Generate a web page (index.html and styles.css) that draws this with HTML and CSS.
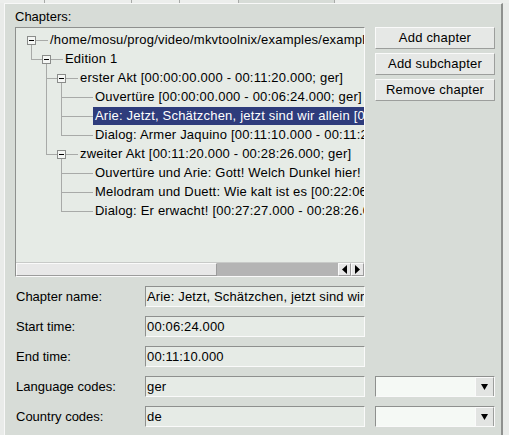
FILE: index.html
```html
<!DOCTYPE html>
<html>
<head>
<meta charset="utf-8">
<link rel="stylesheet" href="styles.css">
</head>
<body>
<div class="tabs">
  <span class="tab t1"></span><span class="tab t2"></span><span class="tab t3"></span><span class="tab t4"></span><span class="tab t5 sel"></span><span class="tab t6"></span>
</div>
<div class="panel">
  <div class="section-label">Chapters:</div>
  <div class="top">
    <div class="tree-frame">
      <div class="tree">
        <div class="row"><span class="cell box open nolead"><span class="exp"></span></span><span class="stub"></span><span class="label">/home/mosu/prog/video/mkvtoolnix/examples/example-chapters-1.xml</span></div>
        <div class="row"><span class="cell corner"></span><span class="cell box open"><span class="exp"></span></span><span class="stub"></span><span class="label">Edition 1</span></div>
        <div class="row"><span class="cell"></span><span class="cell tee"></span><span class="cell box open"><span class="exp"></span></span><span class="stub"></span><span class="label">erster Akt [00:00:00.000 - 00:11:20.000; ger]</span></div>
        <div class="row"><span class="cell"></span><span class="cell vert"></span><span class="cell tee"></span><span class="cell hline"></span><span class="stub"></span><span class="label">Ouvertüre [00:00:00.000 - 00:06:24.000; ger]</span></div>
        <div class="row"><span class="cell"></span><span class="cell vert"></span><span class="cell tee"></span><span class="cell hline"></span><span class="stub"></span><span class="label selected">Arie: Jetzt, Schätzchen, jetzt sind wir allein [00:06:24.000 - 00:11:10.000; ger]</span></div>
        <div class="row"><span class="cell"></span><span class="cell vert"></span><span class="cell corner"></span><span class="cell hline"></span><span class="stub"></span><span class="label">Dialog: Armer Jaquino [00:11:10.000 - 00:11:20.000; ger]</span></div>
        <div class="row"><span class="cell"></span><span class="cell corner"></span><span class="cell box open"><span class="exp"></span></span><span class="stub"></span><span class="label">zweiter Akt [00:11:20.000 - 00:28:26.000; ger]</span></div>
        <div class="row"><span class="cell"></span><span class="cell"></span><span class="cell tee"></span><span class="cell hline"></span><span class="stub"></span><span class="label">Ouvertüre und Arie: Gott! Welch Dunkel hier! [00:11:20.000 - 00:22:06.000; ger]</span></div>
        <div class="row"><span class="cell"></span><span class="cell"></span><span class="cell tee"></span><span class="cell hline"></span><span class="stub"></span><span class="label">Melodram und Duett: Wie kalt ist es [00:22:06.000 - 00:27:27.000; ger]</span></div>
        <div class="row"><span class="cell"></span><span class="cell"></span><span class="cell corner"></span><span class="cell hline"></span><span class="stub"></span><span class="label">Dialog: Er erwacht! [00:27:27.000 - 00:28:26.000; ger]</span></div>
      </div>
      <div class="hscroll">
        <div class="thumb"></div>
        <div class="trough"></div>
        <div class="arrow"><svg width="7" height="9" viewBox="0 0 7 9"><polygon points="6,0 6,9 1,4.5" fill="#000"/></svg></div>
        <div class="arrow"><svg width="7" height="9" viewBox="0 0 7 9"><polygon points="1,0 1,9 6,4.5" fill="#000"/></svg></div>
      </div>
    </div>
    <div class="buttons">
      <div class="btn">Add chapter</div>
      <div class="btn">Add subchapter</div>
      <div class="btn">Remove chapter</div>
    </div>
  </div>
  <div class="form">
    <div class="flabel">Chapter name:</div>
    <div class="entry">Arie: Jetzt, Schätzchen, jetzt sind wir allein</div>
    <div></div>
    <div class="flabel">Start time:</div>
    <div class="entry">00:06:24.000</div>
    <div></div>
    <div class="flabel">End time:</div>
    <div class="entry">00:11:10.000</div>
    <div></div>
    <div class="flabel">Language codes:</div>
    <div class="entry">ger</div>
    <div class="combo"><div class="combo-text"></div><div class="combo-btn"><svg width="7" height="8" viewBox="0 0 7 8"><polygon points="0,1 7,1 3.5,7" fill="#000"/></svg></div></div>
    <div class="flabel">Country codes:</div>
    <div class="entry">de</div>
    <div class="combo"><div class="combo-text"></div><div class="combo-btn"><svg width="7" height="8" viewBox="0 0 7 8"><polygon points="0,1 7,1 3.5,7" fill="#000"/></svg></div></div>
  </div>
</div>
</body>
</html>
```
FILE: styles.css
```css
html, body {
  margin: 0;
  padding: 0;
}
body {
  width: 509px;
  height: 435px;
  overflow: hidden;
  background: #e9ebe9;
  font-family: "Liberation Sans", Arial, sans-serif;
  font-size: 13px;
  color: #000;
}
.tabs {
  display: flex;
  height: 3px;
  background: #eceeec;
}
.tab {
  height: 3px;
  box-sizing: border-box;
  border-right: 1px solid #a8aaa8;
  background: #eceeec;
}
.t1 { width: 45px; }
.t2 { width: 87px; }
.t3 { width: 48px; }
.t4 { width: 59px; }
.t5 { width: 96px; }
.t6 { flex: 1; border-right: none; }
.tab.sel { background: #d7dcd7; }
.panel {
  margin-left: 4px;
  width: 499px;
  height: 432px;
  box-sizing: border-box;
  background: #d7dcd7;
  border-top: 1px solid #f8f8f8;
  border-left: 1px solid #f8f8f8;
  border-right: 2px solid #8e908e;
  padding: 5px 0 0 10px;
}
.section-label {
  height: 15px;
  line-height: 15px;
  margin-bottom: 3px;
}
.top {
  display: flex;
  align-items: flex-start;
}
.tree-frame {
  width: 350px;
  box-sizing: border-box;
  border: 1px solid;
  border-color: #8e908e #fafafa #fafafa #8e908e;
  background: #e6ebe6;
}
.tree {
  height: 234px;
  box-sizing: border-box;
  padding: 3px 0 0 8px;
  overflow: hidden;
}
.row {
  display: flex;
  height: 19px;
  white-space: nowrap;
}
.cell {
  position: relative;
  flex: none;
  width: 15px;
  height: 19px;
}
.stub {
  position: relative;
  flex: none;
  width: 9px;
  height: 19px;
}
.vert::before,
.tee::before {
  content: "";
  position: absolute;
  left: 7px;
  top: 0;
  bottom: 0;
  border-left: 1px solid #a8aaa8;
}
.corner::before {
  content: "";
  position: absolute;
  left: 7px;
  top: 0;
  height: 10px;
  border-left: 1px solid #a8aaa8;
}
.tee::after,
.corner::after {
  content: "";
  position: absolute;
  left: 7px;
  right: 0;
  top: 9px;
  border-top: 1px solid #a8aaa8;
}
.hline::before,
.stub::before,
.box::before {
  content: "";
  position: absolute;
  left: 0;
  right: 0;
  top: 9px;
  border-top: 1px solid #a8aaa8;
}
.box.nolead::before { left: 7px; }
.box.open::after {
  content: "";
  position: absolute;
  left: 7px;
  top: 14px;
  bottom: 0;
  border-left: 1px solid #a8aaa8;
}
.exp {
  position: absolute;
  left: 3px;
  top: 5px;
  width: 9px;
  height: 9px;
  box-sizing: border-box;
  border: 1px solid #8a8c8a;
  background: #f4f6f4;
  z-index: 1;
}
.exp::after {
  content: "";
  position: absolute;
  left: 1px;
  top: 3px;
  width: 5px;
  height: 1px;
  background: #000;
}
.label {
  flex: none;
  height: 18px;
  line-height: 18px;
  padding: 0 2px;
  letter-spacing: 0.2px;
}
.label.selected {
  background: #2e3c7c;
  color: #fff;
}
.hscroll {
  display: flex;
  height: 14px;
  border-top: 1px solid #c8cac8;
  box-sizing: border-box;
  background: #b4b4b4;
}
.thumb {
  width: 201px;
  box-sizing: border-box;
  background: #e8e8e8;
  border: 1px solid;
  border-color: #fafafa #9c9c9c #9c9c9c #fafafa;
}
.trough {
  flex: 1;
}
.arrow {
  width: 13px;
  box-sizing: border-box;
  background: #e6e6e6;
  border: 1px solid;
  border-color: #fafafa #9c9c9c #9c9c9c #fafafa;
  display: flex;
  align-items: center;
  justify-content: center;
}
.arrow svg { display: block; }
.buttons {
  margin-left: 10px;
  width: 120px;
  display: flex;
  flex-direction: column;
  gap: 4px;
}
.btn {
  height: 22px;
  box-sizing: border-box;
  border: 1px solid;
  border-color: #fafafa #9c9e9c #9c9e9c #fafafa;
  background: #e6e8e6;
  text-align: center;
  line-height: 20px;
  letter-spacing: 0.2px;
}
.form {
  margin-top: 9px;
  display: grid;
  grid-template-columns: 120px 220px 120px;
  grid-auto-rows: 21px;
  column-gap: 10px;
  row-gap: 9px;
}
.flabel {
  line-height: 21px;
  padding-left: 1px;
}
.entry {
  box-sizing: border-box;
  border: 1px solid;
  border-color: #8e908e #fafafa #fafafa #8e908e;
  background: #e6ebe6;
  padding-left: 1px;
  line-height: 19px;
  white-space: nowrap;
  overflow: hidden;
  letter-spacing: 0.15px;
}
.combo {
  display: flex;
  box-sizing: border-box;
  border: 1px solid;
  border-color: #8e908e #fafafa #fafafa #8e908e;
  background: #f5f9f5;
}
.combo-text { flex: 1; }
.combo-btn {
  width: 19px;
  box-sizing: border-box;
  background: #e2e4e2;
  border-left: 1px solid #fafafa;
  border-top: 1px solid #fafafa;
  border-right: 1px solid #9c9e9c;
  display: flex;
  align-items: center;
  justify-content: center;
}
.combo-btn svg { display: block; }
```
